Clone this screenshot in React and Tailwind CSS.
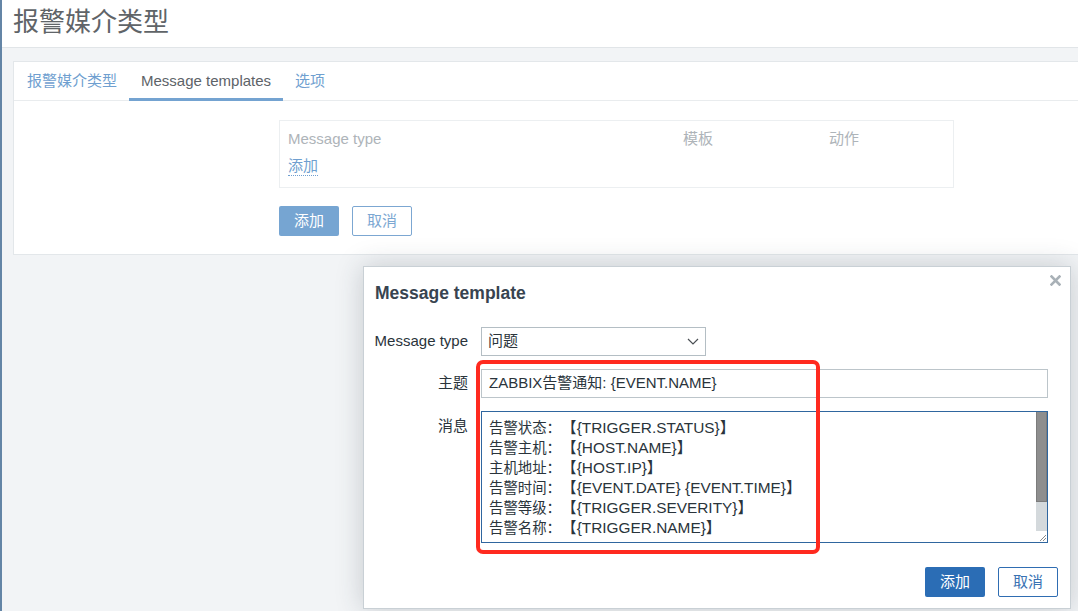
import React from 'react';

const font = "font-['Liberation_Sans','Noto_Sans_CJK_SC',sans-serif]";

const lines = [
  ['告警状态：', '【{TRIGGER.STATUS}】'],
  ['告警主机：', '【{HOST.NAME}】'],
  ['主机地址：', '【{HOST.IP}】'],
  ['告警时间：', '【{EVENT.DATE} {EVENT.TIME}】'],
  ['告警等级：', '【{TRIGGER.SEVERITY}】'],
  ['告警名称：', '【{TRIGGER.NAME}】'],
];

const Tab = ({ label, active, first }) => (
  <div className={`${first ? 'pl-[13px]' : 'pl-[12px]'} pr-[12px] flex items-center text-[15px] ${active ? 'text-[#5d6368] border-b-[3px] border-[#74a3d1] pt-[3px] -mb-px' : 'text-[#6f9fd0]'}`}>
    {label}
  </div>
);

const MessageTemplateDialog = () => (
  <div className="absolute left-[361px] top-[266px] w-[708px] h-[343px] bg-white border border-[#c9d0d5] shadow-[0_0_26px_rgba(40,55,70,0.22)] flex flex-col">
    <button className="absolute right-[9px] top-[7px] w-[12px] h-[12px] flex items-center justify-center">
      <svg width="11" height="11" viewBox="0 0 11 11">
        <path d="M1.5 1.5 L9.5 9.5 M9.5 1.5 L1.5 9.5" stroke="#a9b1b7" strokeWidth="2.6" strokeLinecap="square" />
      </svg>
    </button>
    <div className="h-[52px] pl-[11px] flex items-center">
      <h4 className="text-[17.5px] font-bold text-[#384450]">Message template</h4>
    </div>

    <div className="pt-[8px] flex flex-col gap-[13px] text-[15px] text-[#2a343b]">
      <div className="flex">
        <label className="w-[117px] pr-[13px] text-right h-[29px] flex items-center justify-end">Message type</label>
        <div className="w-[225px] h-[29px] border border-[#b4bec4] flex items-center justify-between pl-[6px] pr-[6px]">
          <span>问题</span>
          <svg width="12" height="7" viewBox="0 0 12 7">
            <polyline points="1,1 6,6 11,1" fill="none" stroke="#4a4f54" strokeWidth="1.2" />
          </svg>
        </div>
      </div>

      <div className="flex">
        <label className="w-[117px] pr-[13px] h-[29px] flex items-center justify-end">主题</label>
        <div className="w-[567px] h-[29px] border border-[#bcc5ca] flex items-center pl-[7px]">
          ZABBIX告警通知: {'{EVENT.NAME}'}
        </div>
      </div>

      <div className="flex">
        <label className="w-[117px] pr-[13px] pt-[4px] text-right">消息</label>
        <div className="w-[567px] h-[132px] border border-[#2f669f] flex">
          <div className="flex-1 pl-[7px] pt-[6px] leading-[20px] text-[14.4px]">
            {lines.map(([k, v]) => (
              <div key={k} className="whitespace-pre">
                {k}<span className="ml-[8px] text-[15.4px]">{v}</span>
              </div>
            ))}
          </div>
          <div className="w-[11px] flex flex-col">
            <div className="h-[90px] bg-[#8e8e8e] border-x border-b border-[#7c7c7c]" />
            <div className="flex-1 bg-[#d4d9dc]" />
            <div className="h-[11px] bg-white flex items-end justify-end">
              <svg width="9" height="9" viewBox="0 0 9 9">
                <path d="M8 2 L2 8 M8 5 L5 8" stroke="#8a8a8a" strokeWidth="1" />
              </svg>
            </div>
          </div>
        </div>
      </div>
    </div>

    <div className="mt-auto flex justify-end gap-[13px] pr-[12px] pb-[11px] text-[15px]">
      <button className="w-[60px] h-[30px] rounded-[2px] bg-[#2b6db5] text-white">添加</button>
      <button className="w-[60px] h-[30px] rounded-[2px] border border-[#2f6db2] text-[#3a72b3] bg-white">取消</button>
    </div>
  </div>
);

export default function App() {
  return (
    <div className={`relative w-[1078px] h-[611px] overflow-hidden bg-[#f2f4f6] border-l-2 border-[#6485a6] flex flex-col ${font}`}>
      <header className="h-[48px] shrink-0 bg-white border-b border-[#e1e5e8] pl-[11px] flex items-center">
        <h1 className="text-[26px] text-[#606468] -mt-[2px]">报警媒介类型</h1>
      </header>

      <div className="pl-[11px] pt-[13px]">
        <div className="bg-white border border-r-0 border-[#e3e7ea] h-[194px] flex flex-col">
          <div className="h-[39px] flex border-b border-[#e9ecee]">
            <Tab label="报警媒介类型" first />
            <Tab label="Message templates" active />
            <Tab label="选项" />
          </div>

          <div className="pl-[265px] pt-[19px]">
            <div className="w-[675px] h-[68px] border border-[#eceff1] pl-[8px] text-[15px]">
              <div className="flex h-[34px] items-center text-[#aeb4b9] pt-[2px]">
                <span className="w-[395px]">Message type</span>
                <span className="w-[146px]">模板</span>
                <span>动作</span>
              </div>
              <div className="flex items-center pt-[2px]">
                <a className="text-[#6f9fd0] border-b border-dotted border-[#6f9fd0] leading-[18px]">添加</a>
              </div>
            </div>
            <div className="flex gap-[13px] mt-[18px] text-[15px]">
              <button className="w-[60px] h-[30px] rounded-[2px] bg-[#76a5d2] text-white">添加</button>
              <button className="w-[60px] h-[30px] rounded-[2px] border border-[#7ca7d2] text-[#7ca7d2] bg-white">取消</button>
            </div>
          </div>
        </div>
      </div>

      <MessageTemplateDialog />

      {/* red annotation frame */}
      <div className="absolute left-[474px] top-[360px] w-[344px] h-[194px] border-4 border-[#ff2a1f] rounded-[7px] pointer-events-none" />
    </div>
  );
}
